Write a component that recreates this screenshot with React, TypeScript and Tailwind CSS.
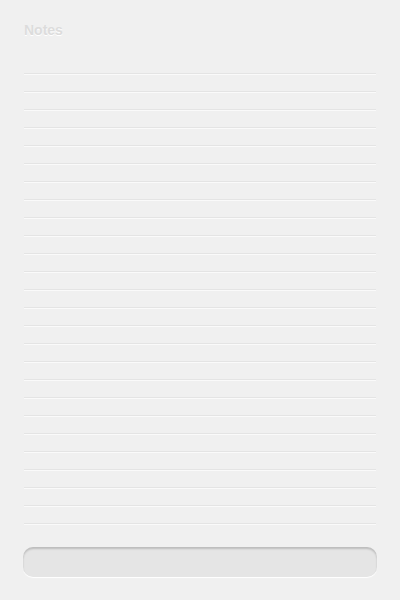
const rows = Array.from({ length: 26 }, (_, i) => i);

export default function App() {
  return (
    <div className="w-[400px] h-[600px] bg-[#f0f0f0] flex flex-col px-[23px] pt-[22px] pb-[23px] font-['Liberation_Sans',Arial,sans-serif]">
      {/* title */}
      <h1 className="px-px text-[14px] leading-[16px] font-bold text-[#dcdcdc] [text-shadow:0_1px_0_#ffffff]">
        Notes
      </h1>

      {/* ruled paper */}
      <div className="mt-[18px] px-px flex flex-col">
        {rows.map((i) => (
          <div
            key={i}
            className="h-[18px] border-b border-[#e4e4e4] shadow-[0_1px_0_#fafafa]"
          />
        ))}
      </div>

      <div className="flex-1" />

      {/* input */}
      <div className="h-[30px] rounded-[10px] bg-[#e5e5e5] shadow-[inset_0_2px_2px_rgba(0,0,0,0.18),0_1px_1px_#ffffff]" />
    </div>
  );
}
